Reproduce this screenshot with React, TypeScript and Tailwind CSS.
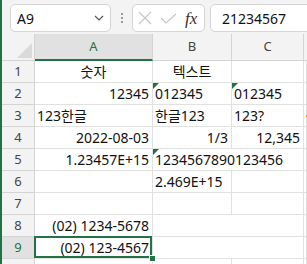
import React from "react";

type Cell = {
  t?: string;
  a?: "l" | "r" | "c";
  tri?: boolean; // green "number stored as text" marker
  open?: boolean; // no right gridline (text runs over)
  dot?: boolean;
  sel?: boolean;
};

const rows: Cell[][] = [
  [{ t: "숫자", a: "c" }, { t: "텍스트", a: "c" }, {}, {}],
  [{ t: "12345", a: "r" }, { t: "012345", tri: true }, { t: "012345", tri: true }, {}],
  [{ t: "123한글" }, { t: "한글123" }, { t: "123?" }, { dot: true }],
  [{ t: "2022-08-03", a: "r" }, { t: "1/3", a: "r" }, { t: "12,345", a: "r" }, {}],
  [{ t: "1.23457E+15", a: "r" }, { t: "1234567890123456", tri: true, open: true }, {}, {}],
  [{}, { t: "2.469E+15" }, {}, {}],
  [{}, {}, {}, {}],
  [{ t: "(02) 1234-5678", a: "r" }, { open: true }, {}, {}],
  [{ t: "(02) 123-4567", a: "r", sel: true }, { open: true }, {}, {}],
  [{}, {}, {}, {}],
];

function SheetCell({ c }: { c: Cell }) {
  const align =
    c.a === "r" ? "justify-end pr-[3px]" : c.a === "c" ? "justify-center" : "justify-start pl-[2px]";
  return (
    <div
      className={`relative h-[22px] flex items-center border-b border-[#e1e1e1] ${
        c.open ? "" : "border-r"
      } ${align} ${c.sel ? "z-10" : ""}`}
    >
      {c.tri && (
        <div className="absolute top-0 left-0 w-0 h-0 border-t-[6px] border-r-[6px] border-t-[#1e7145] border-r-transparent" />
      )}
      {c.t && <span className="whitespace-nowrap leading-[20px]">{c.t}</span>}
      {c.dot && <span className="absolute left-[2px] top-[10px] w-[2px] h-[2px] bg-[#e0a040]" />}
      {c.sel && (
        <>
          <div className="absolute -top-px -left-px right-0 bottom-0 border-2 border-[#217346]" />
          <div className="absolute right-[-4px] bottom-[-4px] w-[7px] h-[7px] bg-[#217346] border border-white" />
        </>
      )}
    </div>
  );
}

export default function App() {
  return (
    <div className="w-[307px] h-[264px] overflow-hidden bg-[#f3f3f3] border-l-2 border-[#217346] font-['Noto_Sans','Noto_Sans_CJK_KR',sans-serif] text-[14px] text-[#111]">
      {/* Formula bar */}
      <div className="h-[34px] flex items-start pt-[4px] pl-[8px]">
        <div className="w-[101px] h-[28px] shrink-0 flex items-center justify-between bg-white border border-[#d4d4d4] rounded-[5px] pl-[6px] pr-[6px]">
          <span>A9</span>
          <svg width="10" height="6" viewBox="0 0 10 6">
            <polyline points="1,1 5,5 9,1" fill="none" stroke="#555" strokeWidth="1.2" />
          </svg>
        </div>
        <div className="w-[21px] h-[28px] shrink-0 flex flex-col items-center justify-center gap-[2px]">
          <span className="w-[2px] h-[2px] bg-[#9a9a9a]" />
          <span className="w-[2px] h-[2px] bg-[#9a9a9a]" />
          <span className="w-[2px] h-[2px] bg-[#9a9a9a]" />
        </div>
        <div className="w-[73px] h-[28px] shrink-0 flex items-center bg-white border border-[#d4d4d4] rounded-[5px] pl-[5px]">
          <svg width="14" height="14" viewBox="0 0 14 14">
            <path d="M1 1 L13 13 M13 1 L1 13" stroke="#c6c6c6" strokeWidth="1.2" />
          </svg>
          <svg className="ml-[8px]" width="17" height="11" viewBox="0 0 17 11">
            <polyline points="1,5 6,10 16,1" fill="none" stroke="#c6c6c6" strokeWidth="1.2" />
          </svg>
          <span className="ml-[8px] italic font-['Liberation_Serif',serif] text-[17px] text-[#333] leading-none">fx</span>
        </div>
        <div className="w-[110px] h-[28px] shrink-0 ml-[5px] flex items-center bg-white border border-[#d4d4d4] rounded-[5px] pl-[11px]">
          21234567
        </div>
      </div>

      {/* Sheet */}
      <div className="grid grid-cols-[33px_118px_79px_72px_1fr] bg-white">
        <div className="h-[27px] bg-[#f3f3f3] border-r border-b border-[#d4d4d4] flex items-end justify-end pr-[2px] pb-[2px]">
          <svg width="15" height="15" viewBox="0 0 15 15">
            <polygon points="15,0 15,15 0,15" fill="#dadada" />
          </svg>
        </div>
        <div className="h-[27px] bg-[#e1e1e1] border-r border-[#d4d4d4] border-b-2 border-b-[#217346] flex items-center justify-center text-[13px] text-[#217346]">
          A
        </div>
        <div className="h-[27px] bg-[#f3f3f3] border-r border-b border-[#d4d4d4] flex items-center justify-center text-[13px] text-[#444]">
          B
        </div>
        <div className="h-[27px] bg-[#f3f3f3] border-r border-b border-[#d4d4d4] flex items-center justify-center text-[13px] text-[#444]">
          C
        </div>
        <div className="h-[27px] bg-[#f3f3f3] border-b border-[#d4d4d4]" />

        {rows.map((r, i) => (
          <React.Fragment key={i}>
            <div
              className={`h-[22px] border-r border-b border-[#d4d4d4] flex items-center justify-center text-[13px] ${
                i === 8 ? "bg-[#e1e1e1] text-[#217346]" : "bg-[#f3f3f3] text-[#444]"
              }`}
            >
              {i < 9 ? i + 1 : null}
            </div>
            {r.map((c, j) => (
              <SheetCell key={j} c={c} />
            ))}
          </React.Fragment>
        ))}
      </div>
    </div>
  );
}
